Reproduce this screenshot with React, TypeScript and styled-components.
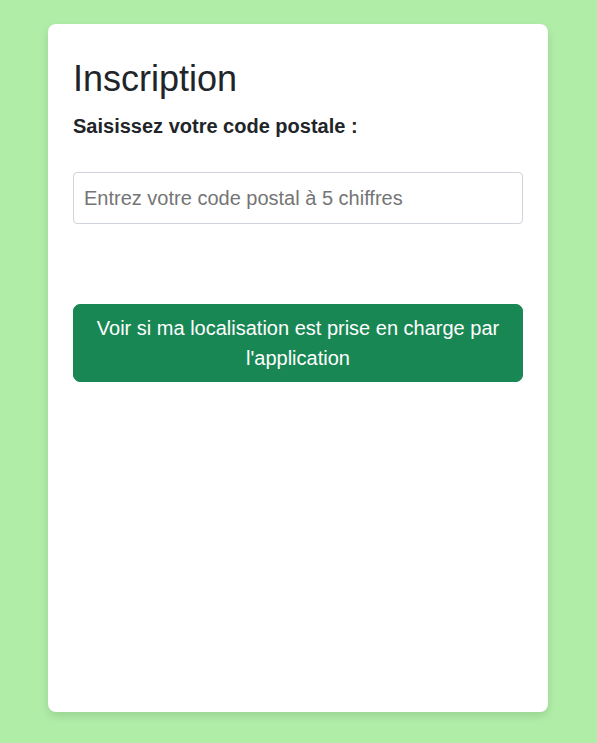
import React from "react";
import styled, { createGlobalStyle } from "styled-components";

const Global = createGlobalStyle`
  html, body { margin: 0; padding: 0; }
  body {
    background: #b0eea8;
    font-family: "Liberation Sans", Arial, sans-serif;
    color: #212529;
    min-height: 743px;
  }
  * { box-sizing: border-box; }
`;

const Page = styled.div`
  display: flex;
  justify-content: flex-start;
  padding: 24px 0 31px 48px;
`;

const Card = styled.div`
  width: 500px;
  height: 688px;
  background: #ffffff;
  border-radius: 8px;
  box-shadow: 0 4px 10px rgba(0, 0, 0, 0.12);
  padding: 33px 25px 25px;
  display: flex;
  flex-direction: column;
`;

const Title = styled.h1`
  font-size: 36px;
  font-weight: 400;
  line-height: 1.2;
  margin: 0 0 11px;
`;

const Label = styled.label`
  font-size: 20px;
  font-weight: 700;
  line-height: 30px;
  margin: 0 0 31px;
`;

const Input = styled.input`
  width: 100%;
  height: 52px;
  padding: 10px 10px;
  font-size: 20px;
  font-family: "Liberation Sans", Arial, sans-serif;
  line-height: 30px;
  border: 1px solid #ced4da;
  border-radius: 4px;
  color: #212529;
  margin: 0 0 80px;
  &::placeholder { color: #757575; opacity: 1; }
`;

const Button = styled.button`
  width: 100%;
  background: #198754;
  color: #ffffff;
  border: 1px solid #198754;
  border-radius: 7px;
  font-family: "Liberation Sans", Arial, sans-serif;
  font-size: 20px;
  line-height: 30px;
  padding: 8px 16px;
  text-align: center;
  cursor: pointer;
`;

export default function App() {
  return (
    <>
      <Global />
      <Page>
        <Card>
          <Title>Inscription</Title>
          <Label htmlFor="cp">Saisissez votre code postale :</Label>
          <Input id="cp" type="text" placeholder="Entrez votre code postal à 5 chiffres" />
          <Button>Voir si ma localisation est prise en charge par l'application</Button>
        </Card>
      </Page>
    </>
  );
}
